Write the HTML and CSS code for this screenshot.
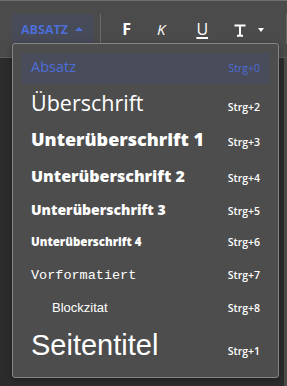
FILE: index.html
```html
<!DOCTYPE html>
<html lang="de">
<head>
<meta charset="utf-8">
<link rel="stylesheet" href="styles.css">
</head>
<body>
<div class="app">
  <div class="toolbar">
    <button class="format-btn">ABSATZ <span class="caret-up"></span></button>
    <span class="sep"></span>
    <span class="tool t-bold">F</span>
    <span class="tool t-italic">K</span>
    <span class="tool t-under">U</span>
    <span class="tool t-type">
      <svg width="12" height="13" viewBox="0 0 12 13"><path d="M0.5 1.5h11M6 1.5v10.2M3 11.7h6" stroke="#fff" stroke-width="2" fill="none"/></svg>
      <span class="caret-down"></span>
    </span>
    <span class="sep"></span>
  </div>
  <div class="content">
    <div class="scroll"></div>
  </div>
  <div class="menu">
    <div class="item active r1"><span class="label l-p">Absatz</span><span class="key">Strg+0</span></div>
    <div class="item r2"><span class="label l-h1">Überschrift</span><span class="key">Strg+2</span></div>
    <div class="item r3"><span class="label l-h2">Unterüberschrift 1</span><span class="key">Strg+3</span></div>
    <div class="item r4"><span class="label l-h3">Unterüberschrift 2</span><span class="key">Strg+4</span></div>
    <div class="item r5"><span class="label l-h4">Unterüberschrift 3</span><span class="key">Strg+5</span></div>
    <div class="item r6"><span class="label l-h5">Unterüberschrift 4</span><span class="key">Strg+6</span></div>
    <div class="item r7"><span class="label l-pre">Vorformatiert</span><span class="key">Strg+7</span></div>
    <div class="item r8"><span class="label l-quote">Blockzitat</span><span class="key">Strg+8</span></div>
    <div class="item r9"><span class="label l-title">Seitentitel</span><span class="key">Strg+1</span></div>
  </div>
</div>
</body>
</html>
```

FILE: styles.css
```css
* { box-sizing: border-box; }
html, body { margin: 0; padding: 0; }
body {
  background: #2c2c2c;
  font-family: "Open Sans", Roboto, sans-serif;
  width: 287px;
  height: 386px;
  overflow: hidden;
}
.app { position: relative; width: 287px; height: 386px; }
.toolbar {
  height: 58px;
  background: #4b4b4b;
  border-top: 1px solid #707070;
  border-bottom: 1px solid #5c5c5c;
  display: flex;
  align-items: flex-start;
  padding: 13px 0 0 12px;
}
.format-btn {
  width: 85px;
  height: 30px;
  background: #474a57;
  border: none;
  border-radius: 3px;
  color: #4d6ed8;
  font-family: "Open Sans", sans-serif;
  font-weight: 700;
  font-size: 12.5px;
  display: flex;
  align-items: center;
  padding: 0 0 0 9px;
  gap: 7px;
}
.caret-up {
  width: 0; height: 0;
  border-left: 4px solid transparent;
  border-right: 4px solid transparent;
  border-bottom: 4px solid #4d6ed8;
}
.sep {
  width: 1px;
  height: 30px;
  background: #6a6a6a;
  margin-left: 6px;
}
.tool {
  height: 30px;
  display: flex;
  align-items: center;
  color: #fff;
}
.t-bold {
  font-family: "Open Sans", sans-serif;
  font-weight: 700;
  font-size: 16px;
  margin-left: 21px;
}
.t-italic {
  font-family: "Open Sans", sans-serif;
  font-style: italic;
  font-size: 15px;
  margin-left: 26px;
}
.t-under {
  font-family: "Open Sans", sans-serif;
  font-size: 16px;
  text-decoration: underline;
  text-decoration-thickness: 1.5px;
  text-underline-offset: 2px;
  margin-left: 31px;
}
.t-type {
  margin-left: 26px;
  gap: 12px;
  margin-right: 16px;
}
.t-type svg { margin-top: 2px; }
.caret-down {
  width: 0; height: 0;
  border-left: 3.5px solid transparent;
  border-right: 3.5px solid transparent;
  border-top: 4px solid #fff;
  margin-top: 1px;
}
.content {
  position: relative;
  height: 328px;
}
.scroll {
  position: absolute;
  right: 0; top: 0;
  width: 3px; height: 100%;
  background: #4b4b4b;
}
.menu {
  position: absolute;
  left: 12px;
  top: 43px;
  width: 267px;
  height: 335px;
  background: #4d4d4d;
  border: 1px solid #858585;
  border-radius: 3px;
  padding: 9px 9px 0 9px;
  box-shadow: 0 2px 6px rgba(0,0,0,0.35);
}
.item {
  display: flex;
  justify-content: space-between;
  align-items: baseline;
  padding: 0 9px 0 9px;
  color: #fff;
  overflow: hidden;
}
.item.active { background: #484c5b; color: #4d6ed8; }
.key {
  font-size: 10.5px;
  font-weight: 600;
}
.active .key { font-weight: 500; }
.label { white-space: nowrap; }
.r1 { height: 31px; padding-top: 4px; }
.r2 { height: 39px; padding-top: 4px; }
.r3 { height: 36px; padding-top: 4px; }
.r4 { height: 36px; padding-top: 6px; }
.r5 { height: 32px; padding-top: 5px; }
.r6 { height: 32px; padding-top: 7px; }
.r7 { height: 34px; padding-top: 9px; }
.r8 { height: 32px; padding-top: 7px; }
.r9 { height: 44px; padding-top: 4px; }
.l-p { font-size: 14.5px; }
.l-h1 { font-size: 21.5px; }
.l-h2 { font-size: 18px; font-weight: 800; }
.l-h3 { font-size: 16px; font-weight: 800; }
.l-h4 { font-size: 14px; font-weight: 800; }
.l-h5 { font-size: 11.5px; font-weight: 800; }
.l-pre { font-family: "Liberation Mono", monospace; font-size: 13.5px; }
.l-quote { font-family: "Liberation Sans", sans-serif; font-size: 13px; padding-left: 21px; }
.l-title { font-family: "Liberation Sans", sans-serif; font-size: 29px; }
```
